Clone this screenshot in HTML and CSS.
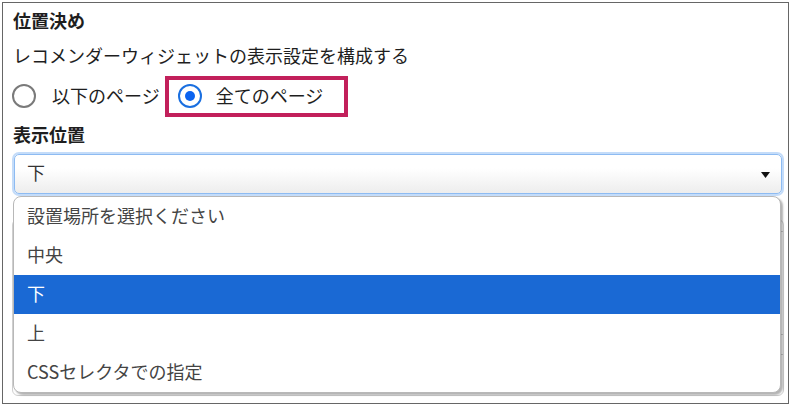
FILE: index.html
```html
<!DOCTYPE html>
<html lang="ja">
<head>
<meta charset="utf-8">
<title>位置決め</title>
<link rel="stylesheet" href="styles.css">
</head>
<body>
<div class="panel">
  <h2 class="title">位置決め</h2>
  <p class="desc">レコメンダーウィジェットの表示設定を構成する</p>
  <div class="radios">
    <label class="opt"><span class="radio"></span><span class="opt-text">以下のページ</span></label>
    <label class="opt opt-marked"><span class="radio radio-on"></span><span class="opt-text">全てのページ</span></label>
  </div>
  <h3 class="label">表示位置</h3>
  <div class="select-wrap">
    <div class="select">
      <span class="value">下</span>
      <svg class="caret" width="9" height="6" viewBox="0 0 9 6"><polygon points="0,0 9,0 4.5,6" fill="#111"/></svg>
    </div>
    <ul class="menu">
      <li class="item">設置場所を選択ください</li>
      <li class="item">中央</li>
      <li class="item item-active">下</li>
      <li class="item">上</li>
      <li class="item">CSSセレクタでの指定</li>
    </ul>
  </div>
  <div class="under">
    <div class="under-row r1"></div>
    <div class="under-row r2"></div>
    <div class="under-row r3"></div>
  </div>
</div>
</body>
</html>
```
FILE: styles.css
```css
* { box-sizing: border-box; }
html, body { margin: 0; padding: 0; background: #fff; }
body {
  width: 791px;
  height: 405px;
  overflow: hidden;
  font-family: "Noto Sans CJK JP", "Noto Sans", sans-serif;
  color: #1e1e1e;
}
.panel {
  margin: 2px;
  height: 402px;
  border: 1px solid #666;
  padding: 5px 4px 0 9px;
  overflow: hidden;
}
.title {
  margin: 0 0 0 1px;
  font-size: 18px;
  line-height: 24px;
  font-weight: 700;
}
.desc {
  margin: 11px 0 0 1px;
  font-size: 18px;
  line-height: 24px;
  font-weight: 400;
}
.radios {
  display: flex;
  align-items: center;
  margin-top: 9px;
  height: 41px;
}
.opt {
  display: flex;
  align-items: center;
  font-size: 18px;
  line-height: 24px;
}
.opt-text { padding-bottom: 3px; }
.radio {
  width: 24px;
  height: 24px;
  border-radius: 50%;
  border: 2px solid #7a7a7a;
  margin-right: 16px;
  margin-bottom: 1px;
  flex: none;
  position: relative;
}
.radio-on {
  border-color: #1a6fe0;
  margin-right: 14px;
}
.radio-on::after {
  content: "";
  position: absolute;
  left: 5px;
  top: 5px;
  width: 10px;
  height: 10px;
  border-radius: 50%;
  background: #0b63f0;
}
.opt-marked {
  margin-left: 5px;
  height: 41px;
  border: 4px solid #c2205b;
  padding: 0 21px 0 9px;
}
.label {
  margin: 5px 0 0 1px;
  font-size: 18px;
  line-height: 24px;
  font-weight: 700;
}
.select-wrap {
  position: relative;
  margin: 8px 2px 0 2px;
  z-index: 2;
}
.select {
  height: 40px;
  border: 1px solid #8dbbf2;
  border-radius: 5px;
  box-shadow: 0 0 0 2px #c4dcf9;
  background: linear-gradient(#ffffff 35%, #ededed);
  display: flex;
  align-items: center;
  justify-content: space-between;
  padding: 0 11px 0 12px;
}
.value {
  font-size: 18px;
  line-height: 24px;
  color: #333;
  padding-bottom: 4px;
}
.caret { display: block; margin-top: 2px; }
.menu {
  position: absolute;
  left: -1px;
  right: 1px;
  top: calc(100% + 2px);
  margin: 0;
  padding: 0;
  list-style: none;
  background: #fff;
  border: 1px solid #b8b8b8;
  border-radius: 8px;
  box-shadow: 2px 2px 2px rgba(0, 0, 0, 0.3);
  overflow: hidden;
}
.item {
  height: 39px;
  display: flex;
  align-items: center;
  padding: 0 0 4px 13px;
  font-size: 18px;
  line-height: 24px;
  color: #444;
}
.item-active {
  background: #1a69d4;
  color: #fff;
}
.under {
  margin: 25px 0 0 0;
  height: 177px;
  border: 1px solid #cfcfcf;
  border-radius: 6px;
  position: relative;
  z-index: 1;
}
.under-row { border-bottom: 1px solid #cfcfcf; }
.r1 { height: 12px; }
.r2 { height: 103px; }
.r3 { height: 20px; }
```
